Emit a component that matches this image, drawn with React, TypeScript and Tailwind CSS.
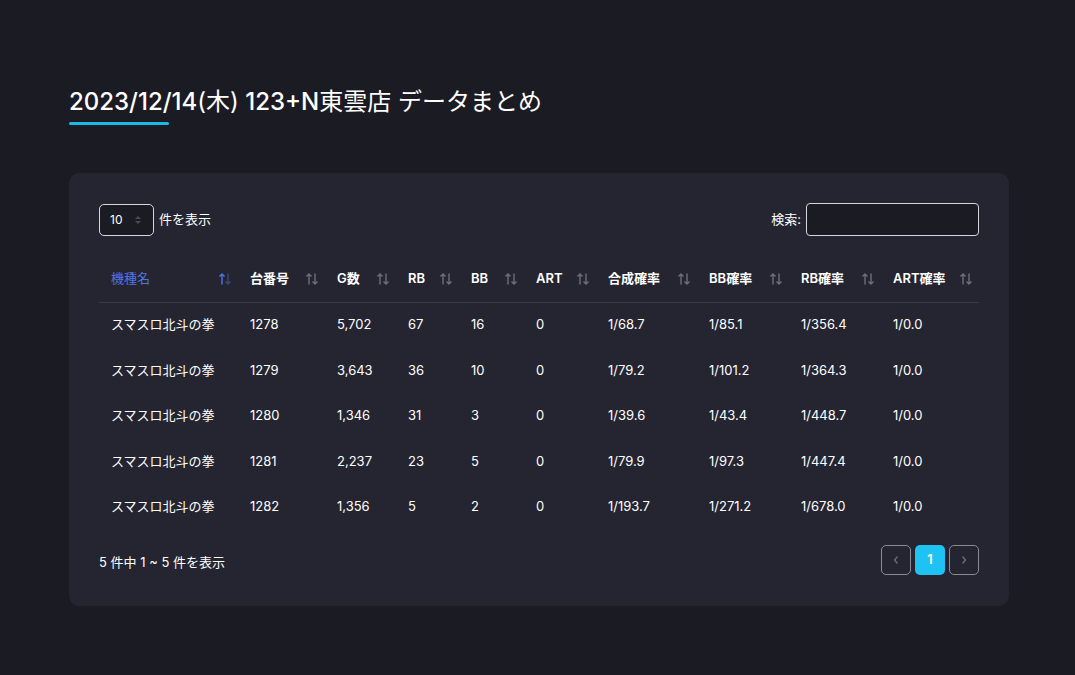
import React from "react";

type Row = {
  name: string;
  no: string;
  games: string;
  rb: string;
  bb: string;
  art: string;
  total: string;
  bbRate: string;
  rbRate: string;
  artRate: string;
};

const rows: Row[] = [
  { name: "スマスロ北斗の拳", no: "1278", games: "5,702", rb: "67", bb: "16", art: "0", total: "1/68.7", bbRate: "1/85.1", rbRate: "1/356.4", artRate: "1/0.0" },
  { name: "スマスロ北斗の拳", no: "1279", games: "3,643", rb: "36", bb: "10", art: "0", total: "1/79.2", bbRate: "1/101.2", rbRate: "1/364.3", artRate: "1/0.0" },
  { name: "スマスロ北斗の拳", no: "1280", games: "1,346", rb: "31", bb: "3", art: "0", total: "1/39.6", bbRate: "1/43.4", rbRate: "1/448.7", artRate: "1/0.0" },
  { name: "スマスロ北斗の拳", no: "1281", games: "2,237", rb: "23", bb: "5", art: "0", total: "1/79.9", bbRate: "1/97.3", rbRate: "1/447.4", artRate: "1/0.0" },
  { name: "スマスロ北斗の拳", no: "1282", games: "1,356", rb: "5", bb: "2", art: "0", total: "1/193.7", bbRate: "1/271.2", rbRate: "1/678.0", artRate: "1/0.0" },
];

const columns = [
  { label: "機種名", width: "w-[139px]", active: true },
  { label: "台番号", width: "w-[87px]" },
  { label: "G数", width: "w-[71px]" },
  { label: "RB", width: "w-[63px]" },
  { label: "BB", width: "w-[65px]" },
  { label: "ART", width: "w-[72px]" },
  { label: "合成確率", width: "w-[101px]" },
  { label: "BB確率", width: "w-[92px]" },
  { label: "RB確率", width: "w-[92px]" },
  { label: "ART確率", width: "w-[98px]" },
];

function SortIcon({ active }: { active?: boolean }) {
  const up = active ? "#4f74e6" : "#6e6e7a";
  const down = active ? "#3a4a78" : "#6e6e7a";
  return (
    <svg width="14" height="14" viewBox="0 0 14 14" fill="none">
      <path d="M4 12.5V2 M1.5 4.5L4 2l2.5 2.5" stroke={up} strokeWidth="1.4" />
      <path d="M10 1.5V12 M7.5 9.5L10 12l2.5-2.5" stroke={down} strokeWidth="1.4" />
    </svg>
  );
}

export default function App() {
  const font = "font-['Inter','Noto_Sans_CJK_JP',sans-serif]";
  return (
    <div className={`min-h-screen bg-[#1b1b23] text-white ${font}`}>
      <div className="pl-[69px] pr-[66px] pt-[84px]">
        <h1 className="text-[24px] leading-[36px] font-medium">
          2023/12/14<span className="font-normal">(木)</span> 123+N<span className="font-normal">東雲店 データまとめ</span>
        </h1>
        <div className="mt-[2px] h-[3px] w-[100px] rounded-full bg-[#1cb8e6]" />

        <div className="mt-[48px] rounded-[10px] bg-[#252531] px-[30px] pt-[30px] pb-[31px]">
          <div className="flex items-center justify-between">
            <div className="flex items-center gap-[5px] text-[13px]">
              <div className="flex h-[32px] w-[55px] items-center justify-between rounded-[5px] border border-[#d6d6dc] bg-[#1b1b23] pl-[10px] pr-[11px] text-[12px]">
                <span>10</span>
                <svg width="8" height="12" viewBox="0 0 8 12">
                  <path d="M1 5L4 2l3 3z" fill="#4a4a56" />
                  <path d="M1 7l3 3 3-3z" fill="#4a4a56" />
                </svg>
              </div>
              <span>件を表示</span>
            </div>
            <div className="flex items-center gap-[5px] text-[13px]">
              <span>検索:</span>
              <div className="h-[33px] w-[173px] rounded-[4px] border border-[#d6d6dc] bg-[#1b1b23]" />
            </div>
          </div>

          <table className="mt-[20px] w-full table-fixed border-collapse text-[13px]">
            <thead>
              <tr className="border-b border-[#3a3a45]">
                {columns.map((c) => (
                  <th key={c.label} className={`${c.width} h-[46px] pl-[12px] pr-[6px] text-left font-semibold`}>
                    <div className="flex items-center justify-between">
                      <span className={c.active ? "text-[#4f74e6] font-normal" : ""}>{c.label}</span>
                      <SortIcon active={c.active} />
                    </div>
                  </th>
                ))}
              </tr>
            </thead>
            <tbody>
              {rows.map((r) => (
                <tr key={r.no} className="h-[45.6px]">
                  <td className="pl-[12px]">{r.name}</td>
                  <td className="pl-[12px]">{r.no}</td>
                  <td className="pl-[12px]">{r.games}</td>
                  <td className="pl-[12px]">{r.rb}</td>
                  <td className="pl-[12px]">{r.bb}</td>
                  <td className="pl-[12px]">{r.art}</td>
                  <td className="pl-[12px]">{r.total}</td>
                  <td className="pl-[12px]">{r.bbRate}</td>
                  <td className="pl-[12px]">{r.rbRate}</td>
                  <td className="pl-[12px]">{r.artRate}</td>
                </tr>
              ))}
            </tbody>
          </table>

          <div className="mt-[15px] flex items-center justify-between">
            <span className="pt-[6px] text-[13px]">5 件中 1 ~ 5 件を表示</span>
            <div className="flex gap-[4px]">
              <div className="flex h-[30px] w-[30px] items-center justify-center rounded-[5px] border border-[#8a8a94]">
                <svg width="8" height="10" viewBox="0 0 8 10" fill="none">
                  <path d="M5.5 1.5L2.5 5l3 3.5" stroke="#6e6e7a" strokeWidth="1.3" />
                </svg>
              </div>
              <div className="flex h-[30px] w-[30px] items-center justify-center rounded-[5px] bg-[#1ec3f4] text-[13px] font-semibold">
                1
              </div>
              <div className="flex h-[30px] w-[30px] items-center justify-center rounded-[5px] border border-[#8a8a94]">
                <svg width="8" height="10" viewBox="0 0 8 10" fill="none">
                  <path d="M2.5 1.5L5.5 5l-3 3.5" stroke="#6e6e7a" strokeWidth="1.3" />
                </svg>
              </div>
            </div>
          </div>
        </div>
      </div>
    </div>
  );
}
